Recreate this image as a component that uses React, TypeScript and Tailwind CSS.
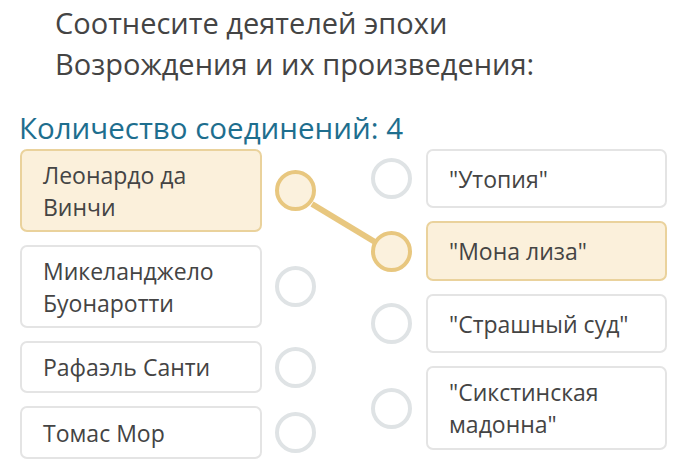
import React from "react";

const Circle = ({ active }: { active?: boolean }) => (
  <div
    className={
      "w-[41px] h-[41px] rounded-full border-[4px] shrink-0 " +
      (active ? "border-[#e8c77f] bg-[#fbf1dd]" : "border-[#dfe3e5] bg-white")
    }
  />
);

const Card = ({ text, active, h, w }: { text: string; active?: boolean; h: string; w: string }) => (
  <div
    className={
      "rounded-[7px] border-2 flex items-center pl-[21px] pr-3 text-[23px] leading-[32px] text-[#444] " +
      h + " " + w + " " +
      (active ? "border-[#ead29c] bg-[#fbf0db]" : "border-[#e4e4e4] bg-white")
    }
  >
    <span className="whitespace-pre-line">{text}</span>
  </div>
);

export default function App() {
  return (
    <div
      className="w-[687px] h-[473px] bg-white overflow-hidden relative"
      style={{ fontFamily: '"Open Sans", "Liberation Sans", sans-serif' }}
    >
      <div className="pl-[55px] pt-[2px] text-[29px] leading-[41px] text-[#444]">
        <div>Соотнесите деятелей эпохи</div>
        <div>Возрождения и их произведения:</div>
      </div>
      <div className="pl-[19px] mt-[26px] text-[29.5px] leading-[36px] text-[#1e6e8e]">
        Количество соединений: 4
      </div>
      <div className="flex pl-[20px] mt-[3px] justify-between pr-[20px]">
        <div className="flex flex-col gap-[13px]">
          <div className="flex items-center gap-[13px]">
            <Card text={"Леонардо да\nВинчи"} active h="h-[83px]" w="w-[242px]" />
            <Circle active />
          </div>
          <div className="flex items-center gap-[13px]">
            <Card text={"Микеланджело\nБуонаротти"} h="h-[83px]" w="w-[242px]" />
            <Circle />
          </div>
          <div className="flex items-center gap-[13px]">
            <Card text="Рафаэль Санти" h="h-[52px]" w="w-[242px]" />
            <Circle />
          </div>
          <div className="flex items-center gap-[13px]">
            <Card text="Томас Мор" h="h-[53px]" w="w-[242px]" />
            <Circle />
          </div>
        </div>
        <div className="flex flex-col gap-[13px]">
          <div className="flex items-center gap-[14px]">
            <Circle />
            <Card text={'"Утопия"'} h="h-[59px]" w="w-[241px]" />
          </div>
          <div className="flex items-center gap-[14px]">
            <Circle active />
            <Card text={'"Мона лиза"'} active h="h-[60px]" w="w-[241px]" />
          </div>
          <div className="flex items-center gap-[14px]">
            <Circle />
            <Card text={'"Страшный суд"'} h="h-[59px]" w="w-[241px]" />
          </div>
          <div className="flex items-center gap-[14px]">
            <Circle />
            <Card text={'"Сикстинская\nмадонна"'} h="h-[84px]" w="w-[241px]" />
          </div>
        </div>
      </div>
      <svg className="absolute left-0 top-0 pointer-events-none" width="687" height="473">
        <line x1="312" y1="204" x2="375" y2="242" stroke="#e8c77f" strokeWidth="6" />
      </svg>
    </div>
  );
}
